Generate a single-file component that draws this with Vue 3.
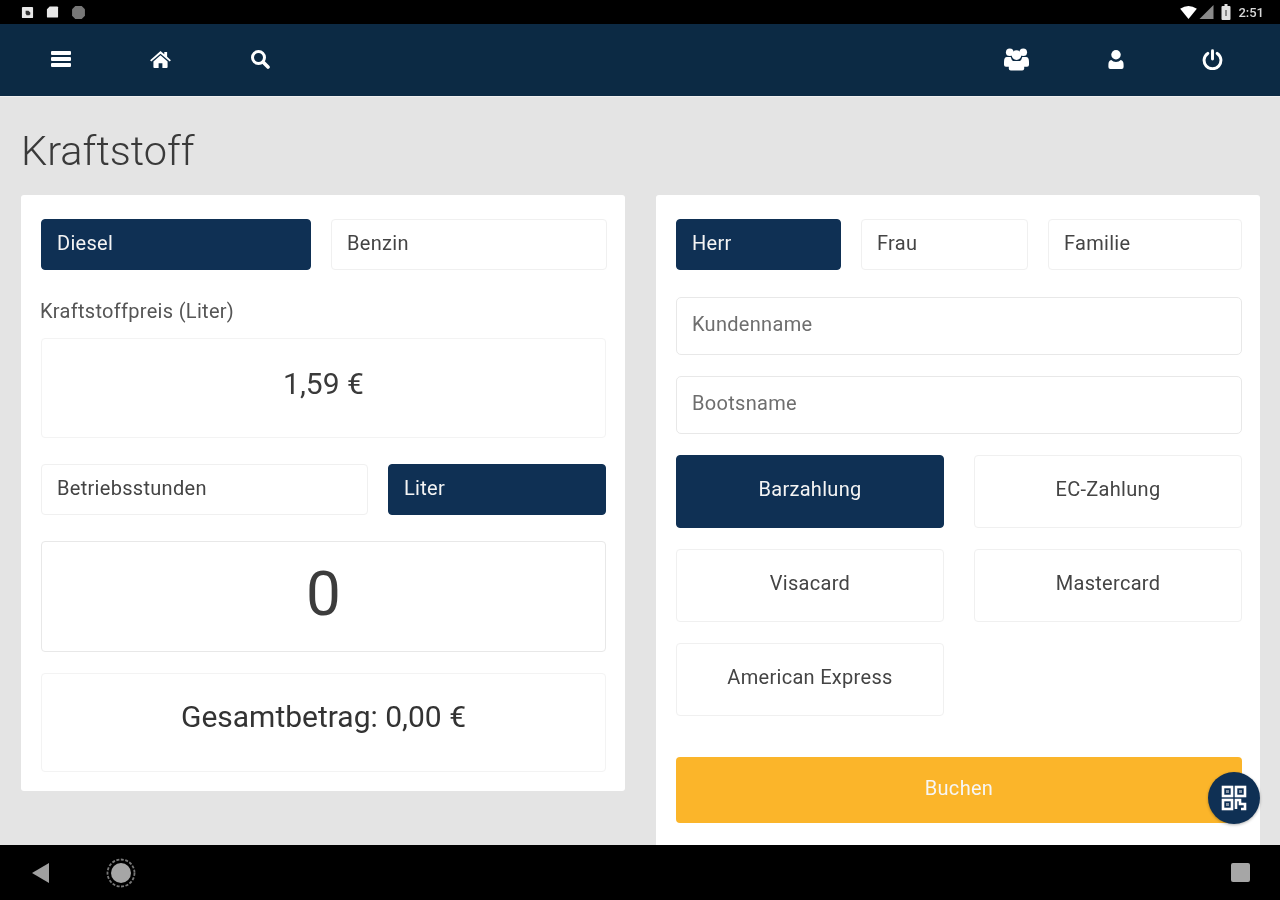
<template>
  <div class="screen">
    <!-- Android status bar -->
    <div class="status-bar">
      <div class="status-left">
        <svg viewBox="0 0 14 14" width="13" height="13">
          <path fill="#e8e8e8" d="M1 2q0-1 1-1h10q1 0 1 1v10q0 1-1 1H2q-1 0-1-1z" />
          <path fill="#333" d="M5 5h3l2 2v2l-1 1H6L5 8z" />
        </svg>
        <svg viewBox="0 0 14 14" width="13" height="14">
          <path fill="#e8e8e8" d="M4 1h8q1 0 1 1v10q0 1-1 1H2q-1 0-1-1V4z" />
        </svg>
        <svg viewBox="0 0 14 14" width="15" height="15">
          <path fill="#777" d="M4 1h6l3 3v6l-3 3H4l-3-3V4z" />
        </svg>
      </div>
      <div class="status-right">
        <svg viewBox="0 0 18 14" width="19" height="13">
          <path fill="#fff" d="M0 3Q9-3 18 3L9 14z" />
        </svg>
        <svg class="st-signal" viewBox="0 0 12 12" width="15" height="14">
          <path fill="#8a8a8a" d="M12 0v12H0z" />
        </svg>
        <svg class="st-battery" viewBox="0 0 9 16" width="10" height="16">
          <path fill="#e0e0e0" d="M3 0h3v2h2q1 0 1 1v12q0 1-1 1H1q-1 0-1-1V3q0-1 1-1h2z" />
          <path fill="#888" d="M3.5 6h2v6h-2z" />
        </svg>
        <span class="clock">2:51</span>
      </div>
    </div>

    <!-- Kopfleiste -->
    <header class="topbar">
      <div class="topbar-group">
        <button class="nav-btn">
          <svg viewBox="0 0 20 18" width="20" height="18">
            <path fill="#fff" d="M1 1h18q1 0 1 1v2q0 1-1 1H1Q0 5 0 4V2q0-1 1-1zm0 6h18q1 0 1 1v2q0 1-1 1H1q-1 0-1-1V8q0-1 1-1zm0 6h18q1 0 1 1v2q0 1-1 1H1q-1 0-1-1v-2q0-1 1-1z" />
          </svg>
        </button>
        <button class="nav-btn">
          <svg viewBox="0 0 22 18" width="21" height="17">
            <path fill="#fff" d="M11 0l4 3.5V1h3v5.2l4 3.5-1.2 1.4L11 3 1.2 11.1 0 9.700z" />
            <path fill="#fff" d="M11 4.500l7.500 6.500V17q0 1-1 1H13v-5H9v5H4.500q-1 0-1-1v-6z" />
          </svg>
        </button>
        <button class="nav-btn">
          <svg viewBox="0 0 20 20" width="20" height="20">
            <circle cx="8.500" cy="8.500" r="6" fill="none" stroke="#fff" stroke-width="3" />
            <path stroke="#fff" stroke-width="3.600" stroke-linecap="round" d="M13.500 13.500l4.500 4.500" />
          </svg>
        </button>
      </div>
      <div class="topbar-group right">
        <button class="nav-btn">
          <svg viewBox="0 0 26 24" width="25" height="24">
            <g fill="#fff">
              <circle cx="6" cy="5" r="4" />
              <circle cx="20" cy="5" r="4" />
              <circle cx="13" cy="8" r="5" />
              <path d="M0 15q0-5 3-5h4q.5 3 3 4.500-4 1-4 5.500H2q-2 0-2-2zM26 15q0-5-3-5h-4q-.5 3-3 4.500 4 1 4 5.500h4q2 0 2-2z" />
              <path d="M9 14h8q4 0 4 5v3q0 2-2 2H7q-2 0-2-2v-3q0-5 4-5z" />
            </g>
          </svg>
        </button>
        <button class="nav-btn user-btn">
          <svg viewBox="0 0 16 20" width="18" height="19">
            <g fill="#fff">
              <circle cx="8" cy="5" r="5" />
              <path d="M3 10.500q2 2 5 2t5-2q3 .5 3 5V18q0 2-2 2H2q-2 0-2-2v-2.500q0-4.500 3-5z" />
            </g>
          </svg>
        </button>
        <button class="nav-btn">
          <svg viewBox="0 0 20 20" width="21" height="21">
            <path fill="none" stroke="#fff" stroke-width="2.800" stroke-linecap="round" d="M5.500 4.200a8 8 0 1 0 9 0" />
            <path stroke="#fff" stroke-width="2.800" stroke-linecap="round" d="M10 1.600v8" />
          </svg>
        </button>
      </div>
    </header>

    <main class="content">
      <h1 class="page-title">Kraftstoff</h1>
      <div class="columns">
        <!-- linke Karte -->
        <section class="card card-left">
          <div class="row-fuel">
            <button
              v-for="f in fuels"
              :key="f"
              class="opt"
              :class="{ active: fuel === f }"
              @click="fuel = f"
            >{{ f }}</button>
          </div>
          <div class="price-label">Kraftstoffpreis (Liter)</div>
          <div class="box price-box">1,59 €</div>
          <div class="row-unit">
            <button
              v-for="u in units"
              :key="u"
              class="opt"
              :class="{ active: unit === u }"
              @click="unit = u"
            >{{ u }}</button>
          </div>
          <div class="box amount-box">0</div>
          <div class="box total-box">Gesamtbetrag: 0,00 €</div>
        </section>

        <!-- rechte Karte -->
        <section class="card card-right">
          <div class="row-title">
            <button
              v-for="s in salutations"
              :key="s"
              class="opt"
              :class="{ active: salutation === s }"
              @click="salutation = s"
            >{{ s }}</button>
          </div>
          <input class="field first" type="text" placeholder="Kundenname" />
          <input class="field" type="text" placeholder="Bootsname" />
          <div class="pay-grid">
            <button
              v-for="p in payments"
              :key="p"
              class="opt pay"
              :class="{ active: payment === p }"
              @click="payment = p"
            >{{ p }}</button>
          </div>
          <button class="book">Buchen</button>
        </section>
      </div>

      <button class="fab">
        <svg viewBox="0 0 26 26" width="26" height="26">
          <g fill="none" stroke="#fff" stroke-width="2.600">
            <rect x="2" y="2" width="9" height="9" />
            <rect x="15" y="2" width="9" height="9" />
            <rect x="2" y="15" width="9" height="9" />
            <path d="M15 24v-9h4v4h5v5h-4" />
          </g>
          <g fill="#8896a6">
            <rect x="5" y="5" width="3" height="3" />
            <rect x="18" y="5" width="3" height="3" />
            <rect x="5" y="18" width="3" height="3" />
          </g>
        </svg>
      </button>
    </main>

    <!-- Android Navigationsleiste -->
    <footer class="navbar">
      <div class="nav-left">
        <svg viewBox="0 0 18 20" width="18" height="20">
          <path fill="#a0a0a0" d="M17 0v20L0 10z" />
        </svg>
        <svg viewBox="0 0 30 30" width="30" height="30">
          <circle cx="15" cy="15" r="13.500" fill="none" stroke="#777" stroke-width="1.800" stroke-dasharray="3 1.500" />
          <circle cx="15" cy="15" r="10" fill="#a6a6a6" />
        </svg>
      </div>
      <div class="nav-square"></div>
    </footer>
  </div>
</template>

<script setup>
import { ref } from 'vue';

const fuels = ['Diesel', 'Benzin'];
const units = ['Betriebsstunden', 'Liter'];
const salutations = ['Herr', 'Frau', 'Familie'];
const payments = ['Barzahlung', 'EC-Zahlung', 'Visacard', 'Mastercard', 'American Express'];

const fuel = ref('Diesel');
const unit = ref('Liter');
const salutation = ref('Herr');
const payment = ref('Barzahlung');
</script>

<style>
html, body {
  margin: 0;
  background: #000;
}
</style>

<style scoped>
.screen {
  width: 1280px;
  height: 900px;
  display: flex;
  flex-direction: column;
  overflow: hidden;
  font-family: Roboto, "Liberation Sans", sans-serif;
  color: #3c3c3c;
  filter: blur(0.45px);
}

button {
  font-family: inherit;
  cursor: pointer;
}

.status-bar {
  height: 24px;
  flex: none;
  background: #000;
  display: flex;
  justify-content: space-between;
  align-items: center;
  padding: 0 16px 0 21px;
}

.status-left,
.status-right {
  display: flex;
  align-items: center;
}

.status-left {
  gap: 12px;
}

.st-signal {
  margin-left: 1px;
}

.st-battery {
  margin-left: 7px;
}

.clock {
  font-size: 13px;
  font-weight: 500;
  color: #d8d8d8;
  margin-left: 7px;
}

.topbar {
  height: 72px;
  flex: none;
  background: #0c2a44;
  display: flex;
  justify-content: space-between;
  align-items: center;
  padding: 0 43px 2px 36px;
  box-sizing: border-box;
}

.topbar-group {
  display: flex;
  gap: 49.5px;
}

.topbar-group.right {
  gap: 48px;
}

.nav-btn {
  width: 50px;
  height: 40px;
  padding: 0;
  border: 0;
  background: none;
  display: flex;
  align-items: center;
  justify-content: center;
}

.user-btn {
  margin-left: 2px;
  margin-right: -2px;
}

.content {
  flex: 1;
  min-height: 0;
  position: relative;
  background: #e4e4e4;
  border-top: 1px solid #f0f0f0;
  box-sizing: border-box;
  padding: 0 20px 0 21px;
  overflow: hidden;
}

.page-title {
  margin: 29px 0 0;
  height: 69px;
  font-size: 41.5px;
  font-weight: 300;
  line-height: 50px;
  color: #3a3a3a;
}

.columns {
  display: grid;
  grid-template-columns: 604px 604px;
  gap: 31px;
  align-items: start;
}

.card {
  background: #fff;
  border-radius: 3px;
  box-sizing: border-box;
  padding: 24px 19px 19px 20px;
}

.card-left {
  height: 596px;
}

.card-right {
  height: 680px;
}

.opt {
  height: 51px;
  box-sizing: border-box;
  padding: 0 15px 4px;
  background: #fff;
  border: 1px solid #f0f0f0;
  border-radius: 4px;
  font-size: 20px;
  letter-spacing: 0.3px;
  color: #444;
  text-align: left;
}

.opt.active {
  background: #0f3054;
  border-color: #0f3054;
  color: #f4f4f4;
}

.row-fuel {
  display: grid;
  grid-template-columns: 270px 276px;
  gap: 20px;
}

.price-label {
  margin: 30px 0 0 -1px;
  height: 38px;
  font-size: 20px;
  letter-spacing: 0.3px;
  line-height: 22px;
  color: #555;
}

.box {
  display: flex;
  align-items: center;
  justify-content: center;
  box-sizing: border-box;
  border: 1px solid #f3f3f3;
  border-radius: 4px;
}

.price-box {
  height: 100px;
  padding-bottom: 10px;
  font-size: 30px;
  color: #3a3a3a;
}

.row-unit {
  margin-top: 26px;
  display: grid;
  grid-template-columns: 327px 218px;
  gap: 20px;
}

.amount-box {
  margin-top: 26px;
  height: 111px;
  padding-bottom: 6px;
  font-size: 62px;
  border-color: #e8e8e8;
}

.total-box {
  margin-top: 21px;
  height: 99px;
  padding-bottom: 12px;
  font-size: 30px;
  color: #333;
}

.row-title {
  display: grid;
  grid-template-columns: 165px 167px 194px;
  gap: 20px;
}

.field {
  display: block;
  width: 566px;
  height: 58px;
  box-sizing: border-box;
  margin-top: 21px;
  padding: 0 15px 5px;
  border: 1px solid #e8e8e8;
  border-radius: 5px;
  font-family: inherit;
  font-size: 20px;
  letter-spacing: 0.3px;
  color: #444;
  outline: none;
}

.field.first {
  margin-top: 27px;
}

.field::placeholder {
  color: #6e6e6e;
}

.pay-grid {
  margin-top: 21px;
  display: grid;
  grid-template-columns: 268px 268px;
  column-gap: 30px;
  row-gap: 21px;
}

.pay {
  height: 73px;
  padding-bottom: 5px;
  text-align: center;
}

.book {
  display: block;
  width: 566px;
  height: 66px;
  margin-top: 41px;
  padding-bottom: 6px;
  border: 0;
  border-radius: 4px;
  background: #fbb52a;
  color: #f6f6f6;
  font-size: 20px;
  letter-spacing: 0.3px;
}

.fab {
  position: absolute;
  right: 20px;
  top: 675px;
  width: 52px;
  height: 52px;
  padding: 0;
  border: 0;
  border-radius: 50%;
  background: #0f3054;
  box-shadow: 0 1px 3px rgba(0, 0, 0, 0.3);
  display: flex;
  align-items: center;
  justify-content: center;
}

.navbar {
  height: 55px;
  flex: none;
  background: #000;
  display: flex;
  justify-content: space-between;
  align-items: center;
  padding: 0 30px 0 32px;
}

.nav-left {
  display: flex;
  align-items: center;
  gap: 56px;
}

.nav-square {
  width: 19px;
  height: 19px;
  border-radius: 2px;
  background: #a6a6a6;
}
</style>
